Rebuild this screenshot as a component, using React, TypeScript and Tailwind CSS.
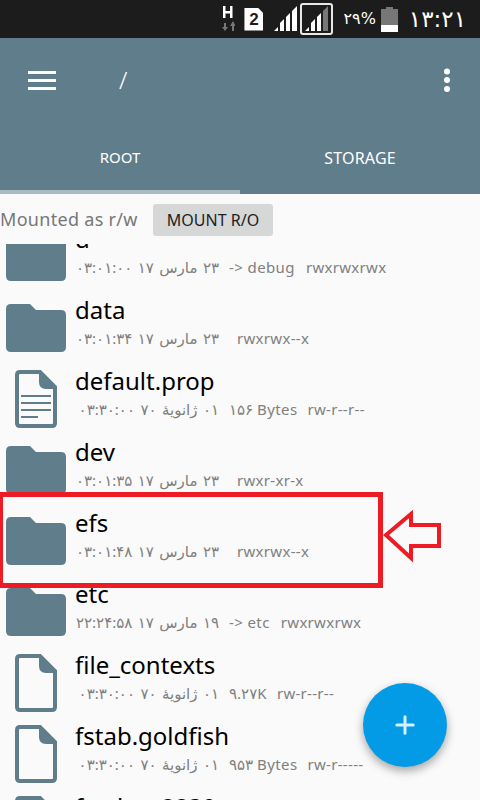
import { Plus } from "lucide-react"

type Row = {
  name: string
  kind: "folder" | "doc" | "file"
  date: string
  info?: string
  perms: string
  gap: string
}

const rows: Row[] = [
  { name: "d", kind: "folder", date: "۲۳ مارس ۱۷ ۰۳:۰۱:۰۰", info: "-> debug", perms: "rwxrwxrwx", gap: "ml-[11px]" },
  { name: "data", kind: "folder", date: "۲۳ مارس ۱۷ ۰۳:۰۱:۳۴", perms: "rwxrwx--x", gap: "ml-[18px]" },
  { name: "default.prop", kind: "doc", date: "۰۱ ژانویهٔ ۷۰ ۰۳:۳۰:۰۰", info: "۱۵۶ Bytes", perms: "rw-r--r--", gap: "ml-[10px]" },
  { name: "dev", kind: "folder", date: "۲۳ مارس ۱۷ ۰۳:۰۱:۳۵", perms: "rwxr-xr-x", gap: "ml-[18px]" },
  { name: "efs", kind: "folder", date: "۲۳ مارس ۱۷ ۰۳:۰۱:۴۸", perms: "rwxrwx--x", gap: "ml-[18px]" },
  { name: "etc", kind: "folder", date: "۱۹ مارس ۱۷ ۲۲:۲۴:۵۸", info: "-> etc", perms: "rwxrwxrwx", gap: "ml-[11px]" },
  { name: "file_contexts", kind: "file", date: "۰۱ ژانویهٔ ۷۰ ۰۳:۳۰:۰۰", info: "۹.۲۷K", perms: "rw-r--r--", gap: "ml-[10px]" },
  { name: "fstab.goldfish", kind: "file", date: "۰۱ ژانویهٔ ۷۰ ۰۳:۳۰:۰۰", info: "۹۵۳ Bytes", perms: "rw-r-----", gap: "ml-[10px]" },
  { name: "fstab.sc8830", kind: "file", date: "۰۱ ژانویهٔ ۷۰ ۰۳:۳۰:۰۰", info: "۹۵۳ Bytes", perms: "rw-r-----", gap: "ml-[10px]" },
]

function FolderIcon() {
  return (
    <svg width="60" height="48" viewBox="0 0 60 48" className="ml-[6px]">
      <path
        d="M5 0H24L30 6H55Q60 6 60 11V43Q60 48 55 48H5Q0 48 0 43V5Q0 0 5 0Z"
        fill="#607d8b"
      />
    </svg>
  )
}

function FileIcon({ lines }: { lines: boolean }) {
  return (
    <svg width="42" height="58" viewBox="0 0 42 58" className="ml-[15px]">
      <path
        d="M5 2H25L40 17V53Q40 56 37 56H5Q2 56 2 53V5Q2 2 5 2Z"
        fill="none"
        stroke="#607d8b"
        strokeWidth="4"
      />
      <path d="M24 2V12Q24 19 31 19H40Z" fill="#607d8b" />
      {lines && (
        <g fill="#607d8b">
          <rect x="6" y="25" width="30" height="2" />
          <rect x="6" y="32" width="30" height="2" />
          <rect x="6" y="39" width="30" height="2" />
          <rect x="6" y="46" width="17" height="2" />
        </g>
      )}
    </svg>
  )
}

function StatusBar() {
  return (
    <div className="h-[38px] bg-[#1c1c1c] flex items-center justify-end shrink-0 text-white">
      {/* network type */}
      <svg width="14" height="26" viewBox="0 0 14 26" className="mr-[9px]">
        <path d="M2 0H4.500V5H9V0H11.500V12H9V7.500H4.500V12H2Z" fill="#fff" />
        <path d="M3 21V17H5V21H7L4 25L1 21ZM11 20V25H13V20H14.500L12 15L9 20Z" fill="#777" />
      </svg>
      {/* sim */}
      <div className="w-[19px] h-[23px] bg-white text-[#1c1c1c] flex items-center justify-center text-[17px] font-bold leading-none mr-[11px] [font-family:'Liberation_Sans',sans-serif] [clip-path:polygon(0_0,70%_0,100%_25%,100%_100%,0_100%)]">
        2
      </div>
      <svg width="24" height="26" viewBox="0 0 24 26" className="mr-[2px]">
        <path d="M0 25L4 21V25ZM6 25V17L10 13V25ZM12 25V11L16 7V25ZM18 25V5L23 0V25Z" fill="#fff" />
      </svg>
      <div className="w-[33px] h-[32px] border-2 border-[#e8e8e8] rounded-[3px] flex items-center justify-center mr-[10px]">
        <svg width="24" height="26" viewBox="0 0 24 26">
          <path d="M0 25L4 21V25ZM6 25V17L10 13V25ZM12 25V11L16 7V25Z" fill="#fff" />
          <path d="M18 25V5L23 0V25Z" fill="#777" />
        </svg>
      </div>
      <span className="text-[16px] leading-none mr-[5px] [font-family:'DejaVu_Sans',sans-serif]">۲۹%</span>
      <svg width="17" height="25" viewBox="0 0 17 25" className="mr-[11px]">
        <rect x="5" y="0" width="7" height="3" fill="#777" />
        <rect x="0" y="2" width="17" height="17" fill="#777" />
        <rect x="0" y="18" width="17" height="7" fill="#fff" />
      </svg>
      <span className="text-[23px] leading-none mr-[14px] [font-family:'DejaVu_Sans',sans-serif]">۱۳:۲۱</span>
    </div>
  )
}

export default function App() {
  return (
    <div className="relative w-[480px] h-[800px] overflow-hidden bg-[#fafafa] flex flex-col [font-family:'Noto_Sans','DejaVu_Sans',sans-serif]">
      <StatusBar />

      {/* toolbar + tabs */}
      <div className="h-[156px] bg-[#607d8b] shrink-0 flex flex-col text-white">
        <div className="h-[84px] flex items-center pl-[28px] pr-[29px]">
          <div className="w-[28px] flex flex-col gap-[5px] mt-[1px]">
            <div className="h-[3px] bg-white" />
            <div className="h-[3px] bg-white" />
            <div className="h-[3px] bg-white" />
          </div>
          <span className="ml-[63px] text-[24px] font-light leading-none">/</span>
          <svg width="8" height="24" viewBox="0 0 8 24" className="ml-auto">
            <circle cx="4" cy="3.500" r="3" fill="#fff" />
            <circle cx="4" cy="12" r="3" fill="#fff" />
            <circle cx="4" cy="21" r="3" fill="#fff" />
          </svg>
        </div>
        <div className="flex-1 flex">
          <div className="w-[240px] flex flex-col">
            <span className="flex-1 flex items-center justify-center text-[15px] pt-[3px]">ROOT</span>
            <div className="h-1 bg-[#a9bbc4]" />
          </div>
          <div className="w-[240px] flex flex-col">
            <span className="flex-1 flex items-center justify-center text-[16px] tracking-[0.2px] pt-[3px]">STORAGE</span>
            <div className="h-1" />
          </div>
        </div>
      </div>

      {/* mount bar */}
      <div className="h-[50px] flex items-center shrink-0 bg-[#fafafa] z-10">
        <span className="text-[18px] tracking-[0.3px] text-[#777] w-[153px] whitespace-nowrap">Mounted as r/w</span>
        <div className="w-[120px] h-[32px] mt-[1px] bg-[#d6d8d8] rounded-[3px] flex items-center justify-center text-[16px] text-[#222]">
          MOUNT R/O
        </div>
      </div>

      {/* file list, scrolled a little */}
      <div className="flex-1 overflow-hidden">
        <div className="-mt-[23px]">
          {rows.map((row) => (
            <div key={row.name} className="h-[71px] flex items-center">
              <div className="w-[75px] shrink-0 flex">
                {row.kind === "folder" ? <FolderIcon /> : <FileIcon lines={row.kind === "doc"} />}
              </div>
              <div className="min-w-0 flex flex-col pb-[12px]">
                <span className="text-[24px] leading-[33px] text-black whitespace-nowrap">{row.name}</span>
                <div className="h-[24px] flex items-center text-[15px] text-[#808080] whitespace-nowrap">
                  <span dir="rtl" className="w-[144px] text-right [word-spacing:1.500px]">{row.date}</span>
                  {row.info && <span dir="ltr" className="ml-[10px] tracking-[0.4px]">{row.info}</span>}
                  <span className={`${row.gap} tracking-[0.3px]`}>{row.perms}</span>
                </div>
              </div>
            </div>
          ))}
        </div>
      </div>

      {/* annotation drawn on the screenshot */}
      <div className="absolute left-[-2px] top-[492px] w-[385px] h-[96px] border-[5px] border-[#ed1c24]" />
      <svg width="60" height="54" viewBox="0 0 60 54" className="absolute left-[383px] top-[510px]">
        <path d="M3 25L28 4V15H56V36H28V48Z" fill="none" stroke="#ed1c24" strokeWidth="4" />
      </svg>

      {/* fab */}
      <div className="absolute left-[363px] top-[683px] w-[84px] h-[84px] rounded-full bg-[#039be5] shadow-[0_4px_10px_rgba(0,0,0,0.35)] flex items-center justify-center text-[#d6effb]">
        <Plus size={28} strokeWidth={3} absoluteStrokeWidth />
      </div>
    </div>
  )
}
